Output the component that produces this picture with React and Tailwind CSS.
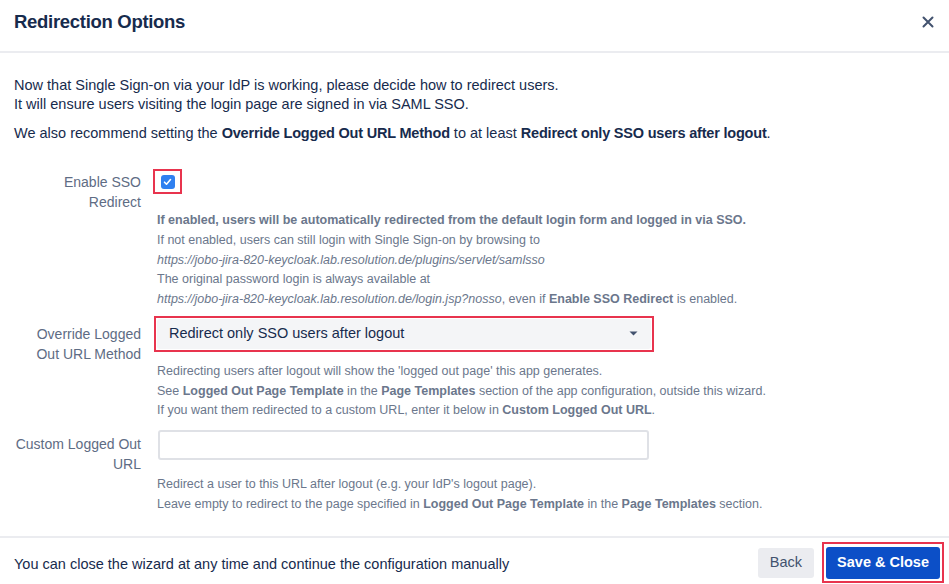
import React, { useState } from 'react';

const Label = ({ children, className = '' }) => (
  <div className={`w-[127px] shrink-0 text-right text-[14px] leading-[20px] text-[#5e6c84] ${className}`}>
    {children}
  </div>
);

const Help = ({ children, className = '' }) => (
  <div className={`text-[12.5px] leading-[19.75px] text-[#6b778c] ${className}`}>{children}</div>
);

const App = () => {
  const [enabled, setEnabled] = useState(true);
  const [method, setMethod] = useState('sso');
  const [url, setUrl] = useState('');

  return (
    <div
      className="w-[949px] h-[584px] bg-white text-[#172b4d] flex flex-col overflow-hidden"
      style={{ fontFamily: '"Liberation Sans", Arial, sans-serif' }}
    >
      <header className="h-[53px] shrink-0 flex items-start justify-between pl-[14px] pr-[15px] pt-[11px] border-b-2 border-[#ebecf0]">
        <h1 className="text-[18.5px] leading-[22px] font-semibold tracking-[-0.3px] text-[#172b4d]">Redirection Options</h1>
        <button className="text-[#42526e] mt-[5px]" aria-label="Close">
          <svg width="12" height="12" viewBox="0 0 12 12" fill="none" stroke="currentColor" strokeWidth="2" strokeLinecap="round">
            <path d="M1.5 1.5l9 9M10.5 1.5l-9 9" />
          </svg>
        </button>
      </header>

      <main className="flex-1 px-[14px] pt-[23px]">
        <p className="text-[14.5px] leading-[19px]">
          Now that Single Sign-on via your IdP is working, please decide how to redirect users.
          <br />
          It will ensure users visiting the login page are signed in via SAML SSO.
        </p>
        <p className="text-[14.5px] leading-[19px] mt-[10px]">
          We also recommend setting the <b className="tracking-[-0.2px]">Override Logged Out URL Method</b> to at least{' '}
          <b className="tracking-[-0.2px]">Redirect only SSO users after logout</b>.
        </p>

        <div className="flex gap-4 mt-[26px]">
          <Label className="pt-[3px]">Enable SSO Redirect</Label>
          <div className="flex-1">
            <div className="ml-[-4px] w-[29px] h-[25px] border-2 border-[#e8344e] flex items-center justify-center">
              <button
                onClick={() => setEnabled((v) => !v)}
                className={`w-[14px] h-[14px] rounded-[3px] flex items-center justify-center ${enabled ? 'bg-[#2f80f0]' : 'bg-[#fafbfc] border-2 border-[#dfe1e6]'}`}
              >
                {enabled && (
                  <svg width="9" height="8" viewBox="0 0 9 8" fill="none" stroke="white" strokeWidth="1.6" strokeLinecap="round" strokeLinejoin="round">
                    <path d="M1.5 4.2l2 2 4-4.6" />
                  </svg>
                )}
              </button>
            </div>
            <Help className="mt-[17px]">
              <b>If enabled, users will be automatically redirected from the default login form and logged in via SSO.</b>
              <br />
              If not enabled, users can still login with Single Sign-on by browsing to
              <br />
              <i>https://jobo-jira-820-keycloak.lab.resolution.de/plugins/servlet/samlsso</i>
              <br />
              The original password login is always available at
              <br />
              <i>https://jobo-jira-820-keycloak.lab.resolution.de/login.jsp?nosso</i>, even if <b>Enable SSO Redirect</b> is
              enabled.
            </Help>
          </div>
        </div>

        <div className="flex gap-4 mt-[6px]">
          <Label className="pt-[8px]">Override Logged Out URL Method</Label>
          <div className="flex-1">
            <div className="ml-[-3px] w-[500px] h-[36px] border-2 border-[#e8344e] p-px">
              <div className="relative h-full rounded-[3px] bg-[#f4f5f7]">
                <select
                  value={method}
                  onChange={(e) => setMethod(e.target.value)}
                  className="appearance-none w-full h-full bg-transparent pl-[12px] pr-8 text-[14.5px] text-[#172b4d] outline-none"
                >
                  <option value="sso">Redirect only SSO users after logout</option>
                  <option value="all">Redirect all users after logout</option>
                  <option value="none">Do not redirect</option>
                </select>
                <svg className="absolute right-[13px] top-[12px] pointer-events-none" width="9" height="5" viewBox="0 0 9 5">
                  <path d="M0.5 0.5h8L4.5 4.5z" fill="#42526e" />
                </svg>
              </div>
            </div>
            <Help className="mt-[10px]">
              Redirecting users after logout will show the 'logged out page' this app generates.
              <br />
              See <b>Logged Out Page Template</b> in the <b>Page Templates</b> section of the app configuration, outside this wizard.
              <br />
              If you want them redirected to a custom URL, enter it below in <b>Custom Logged Out URL</b>.
            </Help>
          </div>
        </div>

        <div className="flex gap-4 mt-[9px]">
          <Label className="pt-[4px]">Custom Logged Out URL</Label>
          <div className="flex-1">
            <input
              value={url}
              onChange={(e) => setUrl(e.target.value)}
              className="block ml-px w-[491px] h-[30px] rounded-[3px] border-2 border-[#dfe1e6] bg-white px-2 text-[14px] outline-none"
            />
            <Help className="mt-[15px]">
              Redirect a user to this URL after logout (e.g. your IdP's logout page).
              <br />
              Leave empty to redirect to the page specified in <b>Logged Out Page Template</b> in the <b>Page Templates</b> section.
            </Help>
          </div>
        </div>
      </main>

      <footer className="h-[48px] shrink-0 border-t-2 border-[#ebecf0] flex items-start justify-between pl-[14px] pr-[5px] pt-[4px]">
        <span className="mt-[12px] text-[14.5px] leading-[20px] text-[#172b4d]">
          You can close the wizard at any time and continue the configuration manually
        </span>
        <div className="flex items-start gap-[8px]">
          <button className="mt-[6px] h-[30px] px-[12px] rounded-[3px] bg-[#ebecf0] text-[14.5px] text-[#42526e]">Back</button>
          <div className="border-2 border-[#e8344e] px-[2px] pt-[3px] pb-[2px]">
            <button className="h-[32px] px-[11px] rounded-[3px] bg-[#0c4fc7] text-[14.5px] font-semibold text-white">
              Save &amp; Close
            </button>
          </div>
        </div>
      </footer>
    </div>
  );
};

export default App;
